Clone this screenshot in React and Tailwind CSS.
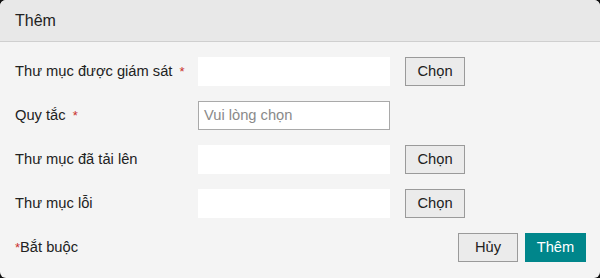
import React from "react";

const font = { fontFamily: '"Liberation Sans", Arial, sans-serif' };

function Row({ label, required, bordered, placeholder, button }) {
  return (
    <div className="flex items-center h-[29px]">
      <div className="w-[183px] flex items-center text-[14.7px] text-[#222]">
        <span>{label}</span>
        {required && <span className="ml-[7px] text-[#c9302c] text-[13px]">*</span>}
      </div>
      <div
        className={
          "w-[192px] h-[29px] bg-white flex items-center px-[5px] text-[14.7px] text-[#8a8a8a] " +
          (bordered ? "border border-[#a9a9a9]" : "")
        }
      >
        {placeholder}
      </div>
      {button && (
        <button className="ml-[15px] w-[60px] h-[29px] bg-[#ebebeb] border border-[#9a9a9a] text-[14.7px] text-[#222]">
          Chọn
        </button>
      )}
    </div>
  );
}

export default function App() {
  return (
    <div className="w-[600px] h-[278px] bg-[#111]" style={font}>
      <div className="w-full h-full rounded-[6px] overflow-hidden bg-[#f4f4f4] flex flex-col">
        <div className="h-[42px] bg-[#e8e8e8] border-b border-[#cfcfcf] flex items-center px-[15px] text-[16px] text-[#222] shrink-0">
          Thêm
        </div>
        <div className="flex flex-col gap-[15px] pt-[15px] px-[15px]">
          <Row label="Thư mục được giám sát" required button />
          <Row label="Quy tắc" required bordered placeholder="Vui lòng chọn" />
          <Row label="Thư mục đã tải lên" button />
          <Row label="Thư mục lỗi" button />
          <div className="flex items-center justify-between h-[29px]">
            <div className="text-[14.7px] text-[#222]">
              <span className="text-[#c9302c] text-[13px]">*</span>Bắt buộc
            </div>
            <div className="flex gap-[7px] mr-[-1px]">
              <button className="w-[60px] h-[29px] bg-[#ebebeb] border border-[#9a9a9a] text-[14.7px] text-[#222]">
                Hủy
              </button>
              <button className="w-[61px] h-[29px] bg-[#00868b] text-[14.7px] text-white">
                Thêm
              </button>
            </div>
          </div>
        </div>
      </div>
    </div>
  );
}
